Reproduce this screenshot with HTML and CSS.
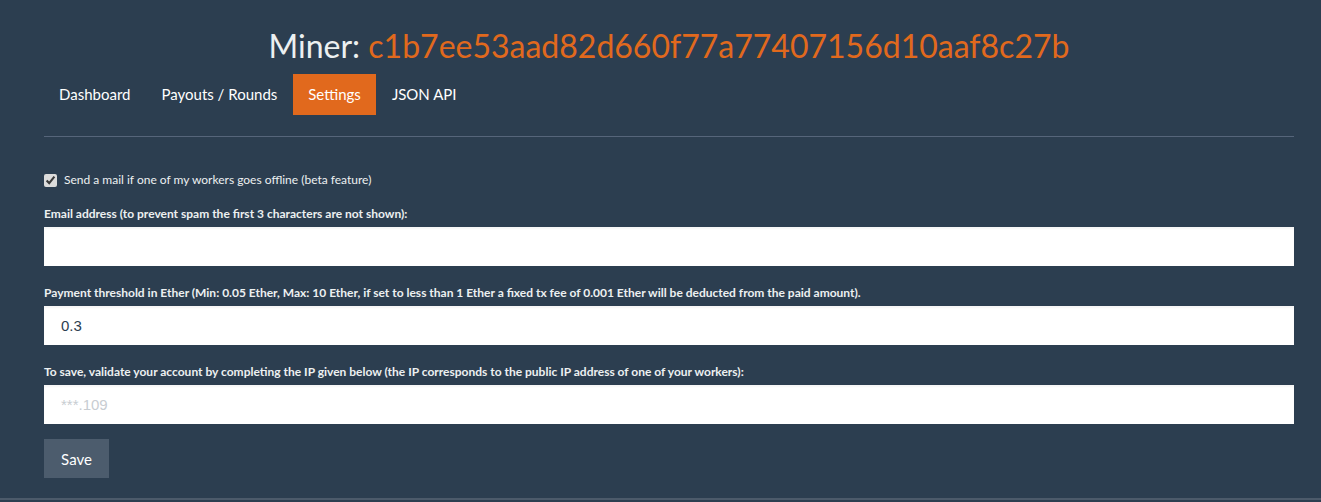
FILE: index.html
```html
<!DOCTYPE html>
<html lang="en">
<head>
    <meta charset="UTF-8">
    <meta name="viewport" content="width=device-width, initial-scale=1.0">
    <title>Miner Settings</title>
    <link rel="stylesheet" href="styles.css">
</head>
<body>
    <div class="container">
        <h1 class="miner-title">Miner: <span class="miner-id">c1b7ee53aad82d660f77a77407156d10aaf8c27b</span></h1>
        <ul class="nav-pills">
            <li><a href="#">Dashboard</a></li>
            <li><a href="#">Payouts / Rounds</a></li>
            <li class="active"><a href="#">Settings</a></li>
            <li><a href="#">JSON API</a></li>
        </ul>
        <hr class="divider">

        <form class="settings-form">
            <div class="checkbox">
                <label><input type="checkbox" checked> Send a mail if one of my workers goes offline (beta feature)</label>
            </div>
            <div class="form-group">
                <label for="email">Email address (to prevent spam the first 3 characters are not shown):</label>
                <input type="text" id="email" class="form-control">
            </div>
            <div class="form-group">
                <label for="threshold">Payment threshold in Ether (Min: 0.05 Ether, Max: 10 Ether, if set to less than 1 Ether a fixed tx fee of 0.001 Ether will be deducted from the paid amount).</label>
                <input type="text" id="threshold" class="form-control" value="0.3">
            </div>
            <div class="form-group">
                <label for="ip">To save, validate your account by completing the IP given below (the IP corresponds to the public IP address of one of your workers):</label>
                <input type="text" id="ip" class="form-control" placeholder="***.109">
            </div>
            <button type="button" class="btn-save">Save</button>
        </form>
    </div>
    <footer class="footer"></footer>
</body>
</html>
```

FILE: styles.css
```css
/* General Styles */
body {
    margin: 0;
    padding: 0;
    background-color: #2c3e50;
    color: #ecf0f1;
    font-family: 'Lato', 'Liberation Sans', sans-serif;
    font-size: 15px;
}
.container {
    width: 1250px;
    margin-left: 44px;
}
.miner-title {
    margin: 0;
    padding-top: 24px;
    height: 50px;
    text-align: center;
    font-size: 32px;
    font-weight: normal;
    line-height: 44px;
}
.miner-id {
    color: #e1691d;
}

/* Nav pills */
.nav-pills {
    list-style: none;
    margin: 0;
    padding: 0;
    display: flex;
    gap: 1px;
}
.nav-pills a {
    display: block;
    padding: 10px 15px;
    line-height: 21px;
    color: #fff;
    text-decoration: none;
}
.nav-pills .active a {
    background-color: #e1691d;
}
.divider {
    margin: 21px 0 0;
    border: 0;
    border-top: 1px solid #56657a;
}

/* Form */
.settings-form {
    padding-top: 35px;
}
.checkbox label {
    display: flex;
    align-items: center;
    gap: 7px;
    font-size: 12px;
    line-height: 16px;
}
.checkbox input {
    margin: 0;
    width: 13px;
    height: 13px;
    accent-color: #dcdcdc;
}
.form-group {
    margin-top: 18px;
}
.form-group + .form-group {
    margin-top: 19px;
}
.form-group label {
    display: block;
    font-size: 12px;
    font-weight: bold;
    line-height: 16px;
    margin-bottom: 5px;
}
.form-control {
    display: block;
    box-sizing: border-box;
    width: 100%;
    height: 39px;
    padding: 0 17px;
    border: none;
    border-radius: 0;
    background: #fff;
    box-shadow: inset 0 2px 2px rgba(0, 0, 0, 0.04);
    font-family: 'Liberation Sans', Arial, sans-serif;
    font-size: 15px;
    color: #2c3e50;
}
.form-control::placeholder {
    color: #c8cdd2;
}
.btn-save {
    margin-top: 15px;
    width: 65px;
    height: 39px;
    border: none;
    background-color: #4c5c6d;
    color: #fff;
    font-family: 'Lato', 'Liberation Sans', sans-serif;
    font-size: 15px;
    cursor: pointer;
}
.footer {
    margin-top: 20px;
    border-top: 2px solid #4c5a6a;
}
```
